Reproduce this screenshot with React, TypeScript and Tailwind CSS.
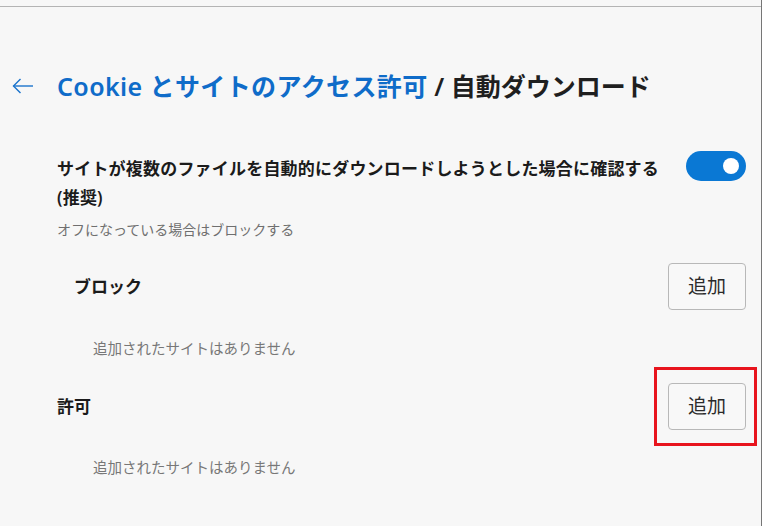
export default function App() {
  return (
    <div
      className="relative w-[762px] h-[526px] overflow-hidden bg-[#f7f7f7] border-r border-[#767676] text-[#1b1b1b]"
      style={{ fontFamily: '"Noto Sans", "Noto Sans CJK JP", sans-serif' }}
    >
      {/* 上の区切り線 */}
      <div className="h-[7px] border-b border-[#b4b4b4]" />

      {/* ヘッダー */}
      <div className="mt-[62px] flex items-center h-[34px] pl-[12px]">
        <div className="w-[45px] flex items-center">
          <svg width="22" height="16" viewBox="0 0 22 16" fill="none" stroke="#1a73cc" strokeWidth="1.4">
            <path d="M21 8H1.5" />
            <path d="M8.5 1L1.5 8l7 7" />
          </svg>
        </div>
        <h1 className="text-[25px] leading-[34px] font-semibold whitespace-nowrap">
          <span className="text-[#0f6cc9] tracking-[0.4px]">Cookie とサイトのアクセス許可</span>
          <span className="text-[#1f1f1f]"> / 自動ダウンロード</span>
        </h1>
      </div>

      <div className="pl-[57px] pr-[15px]">
        {/* 設定 */}
        <div className="mt-[51px] flex items-start justify-between">
          <div>
            <p className="text-[17px] leading-[29px] font-semibold tracking-[0.2px]">
              サイトが複数のファイルを自動的にダウンロードしようとした場合に確認する
              <br />
              (推奨)
            </p>
            <p className="mt-[8px] text-[14px] leading-[20px] text-[#6f6f6f]">オフになっている場合はブロックする</p>
          </div>
          <div className="mt-[-3px] w-[60px] h-[30px] rounded-full bg-[#0a78d4] flex items-center justify-end pr-[7px]">
            <div className="w-[16px] h-[16px] rounded-full bg-white" />
          </div>
        </div>

        {/* ブロック */}
        <div className="mt-[23px] flex items-center justify-between">
          <span className="pl-[17px] text-[17px] font-semibold">ブロック</span>
          <button className="w-[78px] h-[47px] rounded-[4px] border border-[#b8b8b8] bg-[#f8f8f8] text-[19px] text-[#2b2b2b]">
            追加
          </button>
        </div>
        <p className="mt-[28px] pl-[36px] text-[14.5px] leading-[20px] text-[#777777]">追加されたサイトはありません</p>

        {/* 許可 */}
        <div className="mt-[25px] flex items-center justify-between">
          <span className="text-[17px] font-semibold">許可</span>
          <button className="w-[78px] h-[47px] rounded-[4px] border border-[#b8b8b8] bg-[#f8f8f8] text-[19px] text-[#2b2b2b]">
            追加
          </button>
        </div>
        <p className="mt-[27px] pl-[36px] text-[14.5px] leading-[20px] text-[#777777]">追加されたサイトはありません</p>
      </div>

      {/* 赤い枠 */}
      <div className="absolute left-[654px] top-[367px] w-[103px] h-[79px] border-[3px] border-[#e8141d]" />
    </div>
  );
}
